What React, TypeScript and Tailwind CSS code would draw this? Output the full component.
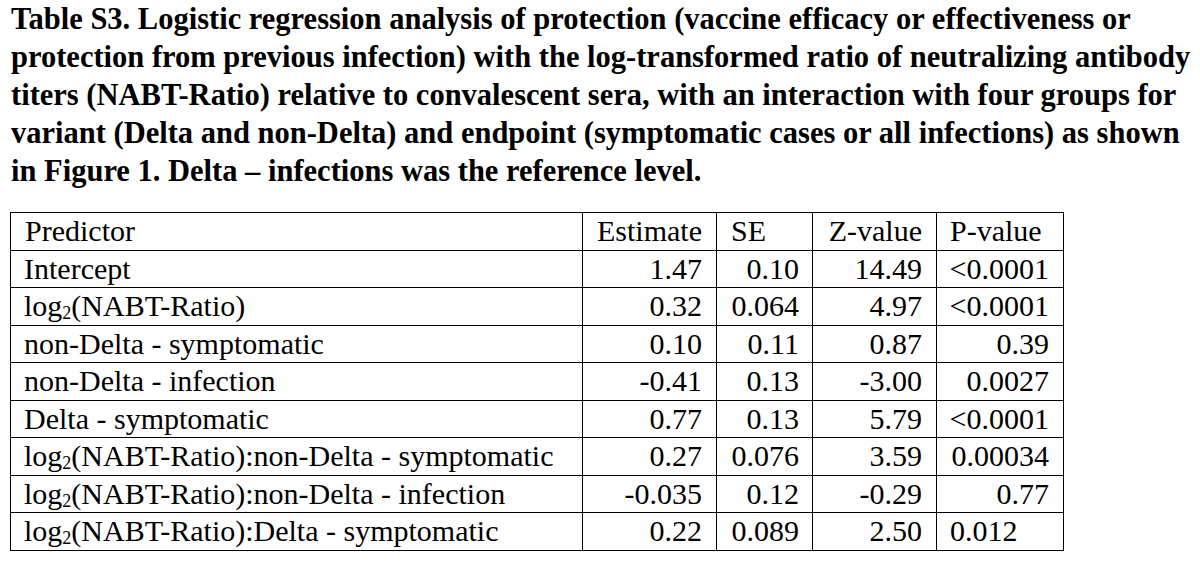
import React from "react";

type Row = {
  label: React.ReactNode;
  est: string;
  se: string;
  z: string;
  p: string;
  pLeft?: boolean;
};

const Log2 = () => (
  <>
    log<sub className="text-[18px] align-baseline relative top-[3px]">2</sub>
  </>
);

const rows: Row[] = [
  { label: "Intercept", est: "1.47", se: "0.10", z: "14.49", p: "<0.0001" },
  { label: <><Log2 />(NABT-Ratio)</>, est: "0.32", se: "0.064", z: "4.97", p: "<0.0001" },
  { label: "non-Delta - symptomatic", est: "0.10", se: "0.11", z: "0.87", p: "0.39" },
  { label: "non-Delta - infection", est: "-0.41", se: "0.13", z: "-3.00", p: "0.0027" },
  { label: "Delta - symptomatic", est: "0.77", se: "0.13", z: "5.79", p: "<0.0001" },
  { label: <><Log2 />(NABT-Ratio):non-Delta - symptomatic</>, est: "0.27", se: "0.076", z: "3.59", p: "0.00034" },
  { label: <><Log2 />(NABT-Ratio):non-Delta - infection</>, est: "-0.035", se: "0.12", z: "-0.29", p: "0.77" },
  { label: <><Log2 />(NABT-Ratio):Delta - symptomatic</>, est: "0.22", se: "0.089", z: "2.50", p: "0.012", pLeft: true },
];

const cell = "border border-black h-[36.5px] p-0 leading-[36.5px] whitespace-nowrap";

export default function App() {
  return (
    <div
      className="w-[1200px] h-[572px] bg-white text-black overflow-hidden"
      style={{ fontFamily: '"Liberation Serif", "Times New Roman", serif' }}
    >
      <p className="pl-[11px] text-[30.5px] leading-[38px] font-bold whitespace-nowrap">
        Table S3. Logistic regression analysis of protection (vaccine efficacy or effectiveness or
        <br />
        protection from previous infection) with the log-transformed ratio of neutralizing antibody
        <br />
        titers (NABT-Ratio) relative to convalescent sera, with an interaction with four groups for
        <br />
        variant (Delta and non-Delta) and endpoint (symptomatic cases or all infections) as shown
        <br />
        in Figure 1. Delta – infections was the reference level.
      </p>
      <table className="ml-[10px] mt-[22px] border-collapse text-[30px] table-fixed w-[1053px]">
        <colgroup>
          <col className="w-[572px]" />
          <col className="w-[134px]" />
          <col className="w-[96px]" />
          <col className="w-[124px]" />
          <col className="w-[127px]" />
        </colgroup>
        <thead>
          <tr>
            <th className={`${cell} font-normal text-left pl-[14px]`}>Predictor</th>
            <th className={`${cell} font-normal text-right pr-[14px]`}>Estimate</th>
            <th className={`${cell} font-normal text-left pl-[14px]`}>SE</th>
            <th className={`${cell} font-normal text-right pr-[14px]`}>Z-value</th>
            <th className={`${cell} font-normal text-left pl-[13px]`}>P-value</th>
          </tr>
        </thead>
        <tbody>
          {rows.map((r, i) => (
            <tr key={i}>
              <td className={`${cell} text-left pl-[13px]`}>{r.label}</td>
              <td className={`${cell} text-right pr-[14px]`}>{r.est}</td>
              <td className={`${cell} text-right pr-[13px]`}>{r.se}</td>
              <td className={`${cell} text-right pr-[14px]`}>{r.z}</td>
              <td className={`${cell} ${r.pLeft ? "text-left pl-[13px]" : "text-right pr-[14px]"}`}>{r.p}</td>
            </tr>
          ))}
        </tbody>
      </table>
    </div>
  );
}
